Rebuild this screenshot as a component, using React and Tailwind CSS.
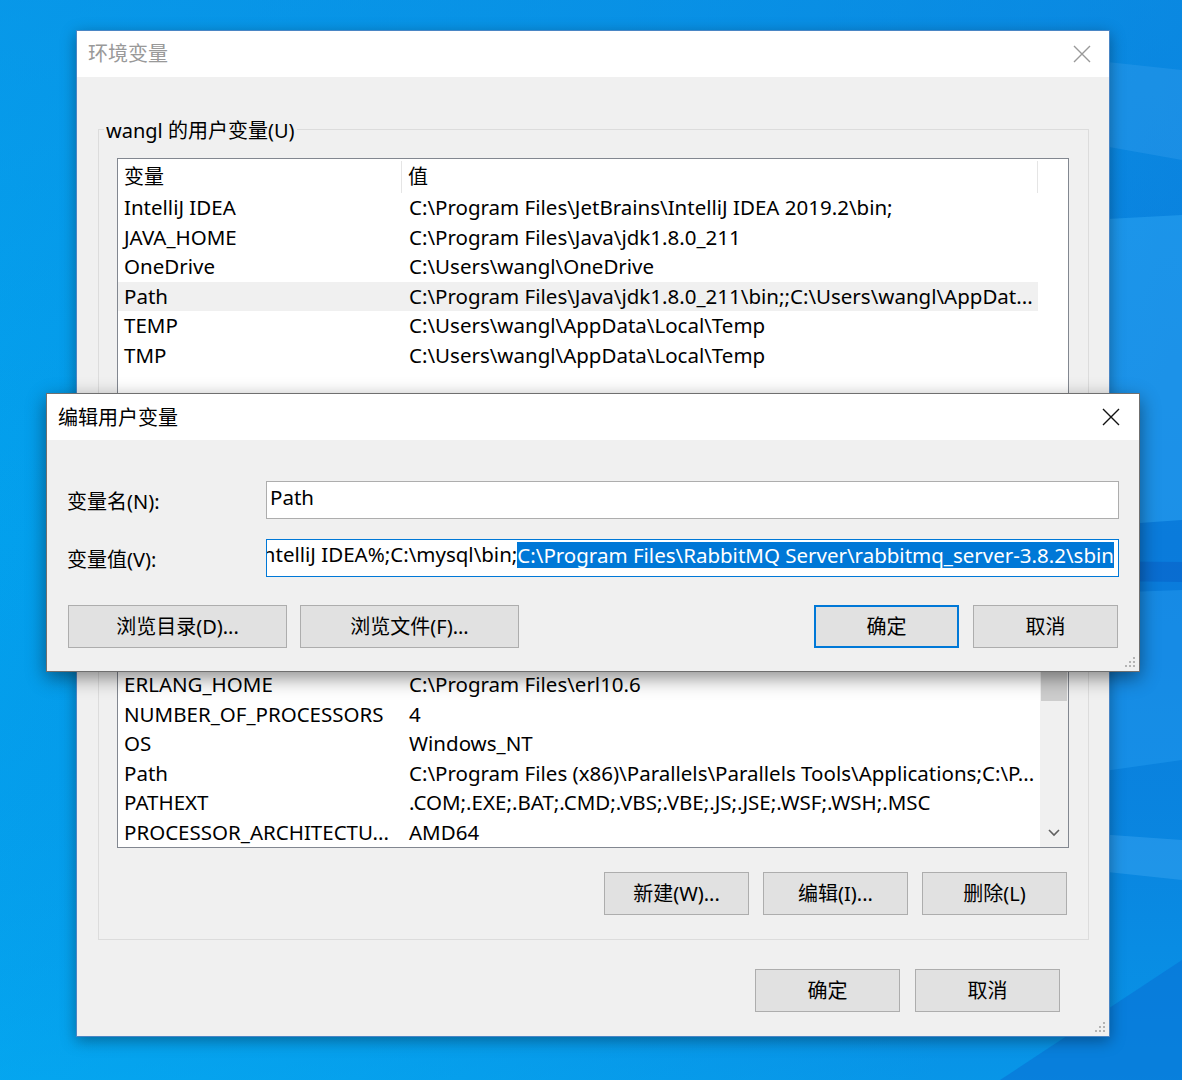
import React from 'react';

const userVars = [
  ['IntelliJ IDEA', 'C:\\Program Files\\JetBrains\\IntelliJ IDEA 2019.2\\bin;'],
  ['JAVA_HOME', 'C:\\Program Files\\Java\\jdk1.8.0_211'],
  ['OneDrive', 'C:\\Users\\wangl\\OneDrive'],
  ['Path', 'C:\\Program Files\\Java\\jdk1.8.0_211\\bin;;C:\\Users\\wangl\\AppDat...'],
  ['TEMP', 'C:\\Users\\wangl\\AppData\\Local\\Temp'],
  ['TMP', 'C:\\Users\\wangl\\AppData\\Local\\Temp'],
];

const sysVars = [
  ['ERLANG_HOME', 'C:\\Program Files\\erl10.6'],
  ['NUMBER_OF_PROCESSORS', '4'],
  ['OS', 'Windows_NT'],
  ['Path', 'C:\\Program Files (x86)\\Parallels\\Parallels Tools\\Applications;C:\\P...'],
  ['PATHEXT', '.COM;.EXE;.BAT;.CMD;.VBS;.VBE;.JS;.JSE;.WSF;.WSH;.MSC'],
  ['PROCESSOR_ARCHITECTU...', 'AMD64'],
];

function CloseX({ color }) {
  return (
    <svg width="18" height="18" viewBox="0 0 18 18">
      <path d="M1 1 L17 17 M17 1 L1 17" stroke={color} strokeWidth="1.4" fill="none" />
    </svg>
  );
}

function Grip() {
  return (
    <svg width="12" height="12" viewBox="0 0 12 12">
      <rect x="9" y="1" width="2" height="2" fill="#b4b4b4" />
      <rect x="5" y="5" width="2" height="2" fill="#b4b4b4" />
      <rect x="9" y="5" width="2" height="2" fill="#b4b4b4" />
      <rect x="1" y="9" width="2" height="2" fill="#b4b4b4" />
      <rect x="5" y="9" width="2" height="2" fill="#b4b4b4" />
      <rect x="9" y="9" width="2" height="2" fill="#b4b4b4" />
    </svg>
  );
}

function Btn({ children, wide, primary }) {
  return (
    <div
      className={
        'h-[43px] flex items-center justify-center bg-[#e1e1e1] text-[20px] text-black ' +
        (wide ? 'w-[219px] ' : 'w-[145px] ') +
        (primary ? 'border-2 border-[#0078d7]' : 'border border-[#adadad]')
      }
    >
      {children}
    </div>
  );
}

function Row({ name, value, selected }) {
  return (
    <div className={'flex h-[29.5px] items-center shrink-0 w-[920px] ' + (selected ? 'bg-[#f0f0f0]' : '')}>
      <div className="w-[284px] shrink-0 pl-[6px] whitespace-nowrap overflow-hidden">{name}</div>
      <div className="pl-[7px] whitespace-nowrap">{value}</div>
    </div>
  );
}

function GroupBox({ label, className, children }) {
  return (
    <div className={'relative border border-[#dcdcdc] ' + className}>
      {label && (
        <span className="absolute left-[5px] -top-[13px] bg-[#f0f0f0] px-[2px] leading-[28px] text-[20px]">
          {label}
        </span>
      )}
      {children}
    </div>
  );
}

function Wallpaper() {
  return (
    <svg className="absolute inset-0" width="1182" height="1080" viewBox="0 0 1182 1080">
      <defs>
        <linearGradient id="bg" x1="0" y1="0" x2="1" y2="0.3">
          <stop offset="0" stopColor="#02a5ef" />
          <stop offset="0.55" stopColor="#0592e6" />
          <stop offset="1" stopColor="#0a7bdb" />
        </linearGradient>
        <linearGradient id="bgv" x1="0" y1="0" x2="0" y2="1">
          <stop offset="0" stopColor="#0b8fe4" stopOpacity="0.6" />
          <stop offset="0.5" stopColor="#0b8fe4" stopOpacity="0" />
          <stop offset="1" stopColor="#06b0f4" stopOpacity="0.5" />
        </linearGradient>
      </defs>
      <rect width="1182" height="1080" fill="url(#bg)" />
      <rect width="1182" height="1080" fill="url(#bgv)" />
      <polygon points="900,40 1182,70 1182,160 900,110" fill="#3aa0ee" opacity="0.35" />
      <polygon points="900,230 1182,215 1182,520 900,540" fill="#2ea6f4" opacity="0.5" />
      <polygon points="900,560 1182,562 1182,582 900,578" fill="#0866cc" opacity="0.7" />
      <polygon points="900,600 1182,590 1182,760 900,800" fill="#27a0f2" opacity="0.4" />
      <polygon points="900,820 1182,840 1182,880 900,850" fill="#4ab0f5" opacity="0.35" />
      <polygon points="1000,1080 1182,960 1182,1080" fill="#0872d6" opacity="0.6" />
    </svg>
  );
}

export default function App() {
  return (
    <div className="relative w-[1182px] h-[1080px] overflow-hidden font-['Noto_Sans','Noto_Sans_CJK_SC',sans-serif] text-black">
      <Wallpaper />

      {/* main window */}
      <div className="absolute left-[76px] top-[30px] w-[1034px] h-[1007px] border border-[#4a86c5] bg-[#f0f0f0] shadow-[0_4px_14px_rgba(0,0,0,0.35)] flex flex-col">
        <div className="h-[46px] shrink-0 bg-white flex items-center justify-between pl-[11px] pr-[18px]">
          <span className="text-[20px] text-[#999999]">环境变量</span>
          <CloseX color="#999999" />
        </div>
        <div className="relative flex-1 pl-[21px] pr-[20px] pt-[52px] flex flex-col">
          <GroupBox label="wangl 的用户变量(U)" className="pt-[28px] pl-[18px] pr-[19px] pb-[23px]">
            <div className="h-[262px] border border-[#828790] bg-white text-[20.5px] overflow-hidden flex flex-col">
              <div className="flex h-[34px] shrink-0 items-center text-[20px] pt-[2px]">
                <div className="w-[284px] pl-[6px] self-stretch flex items-center border-r border-[#e5e5e5]">变量</div>
                <div className="w-[636px] pl-[6px] self-stretch flex items-center border-r border-[#e5e5e5]">值</div>
              </div>
              {userVars.map(([n, v]) => (
                <Row key={n} name={n} value={v} selected={n === 'Path'} />
              ))}
            </div>
            <div className="mt-[23px] flex justify-end gap-[14px] pr-[2px]">
              <Btn>新建(N)...</Btn>
              <Btn>编辑(E)...</Btn>
              <Btn>删除(D)</Btn>
            </div>
          </GroupBox>

          <GroupBox label="系统变量(S)" className="mt-[22px] pt-[28px] pl-[18px] pr-[19px] pb-[24px]">
            <div className="h-[287px] border border-[#828790] bg-white text-[20.5px] overflow-hidden flex">
              <div className="flex-1 flex flex-col justify-end overflow-hidden">
                {sysVars.map(([n, v]) => (
                  <Row key={n + v} name={n} value={v} />
                ))}
              </div>
              <div className="w-[28px] shrink-0 bg-[#f0f0f0] flex flex-col justify-between items-center">
                <div className="w-[26px] h-[139px] bg-[#cdcdcd]" />
                <svg width="12" height="8" viewBox="0 0 12 8" className="mb-[10px]">
                  <path d="M1 1 L6 6 L11 1" stroke="#606060" strokeWidth="1.6" fill="none" />
                </svg>
              </div>
            </div>
            <div className="mt-[24px] flex justify-end gap-[14px] pr-[2px]">
              <Btn>新建(W)...</Btn>
              <Btn>编辑(I)...</Btn>
              <Btn>删除(L)</Btn>
            </div>
          </GroupBox>

          <div className="mt-[29px] flex justify-end gap-[15px] pr-[29px]">
            <Btn>确定</Btn>
            <Btn>取消</Btn>
          </div>
          <div className="absolute right-[3px] bottom-[3px]">
            <Grip />
          </div>
        </div>
      </div>

      {/* edit dialog */}
      <div className="absolute left-[46px] top-[393px] w-[1094px] h-[279px] border border-[#6f6f6f] bg-[#f0f0f0] shadow-[0_6px_18px_rgba(0,0,0,0.45)] flex flex-col">
        <div className="h-[46px] shrink-0 bg-white flex items-center justify-between pl-[11px] pr-[19px]">
          <span className="text-[20px] pt-[1px]">编辑用户变量</span>
          <CloseX color="#111111" />
        </div>
        <div className="relative flex-1 px-[21px] pt-[41px] flex flex-col text-[20px]">
          <div className="flex items-center h-[38px]">
            <div className="w-[199px] shrink-0 pt-[4px] -ml-[1px]">变量名(N):</div>
            <div className="flex-1 h-[38px] border border-[#adadad] bg-white pl-[3px] pt-[1px] leading-[28px] text-[20.5px] mr-[-1px]">Path</div>
          </div>
          <div className="flex items-center h-[38px] mt-[20px]">
            <div className="w-[199px] shrink-0 pt-[4px] -ml-[1px]">变量值(V):</div>
            <div className="flex-1 h-[38px] border border-[#0078d7] bg-white flex justify-end items-center pr-[4px] pb-[7px] overflow-hidden whitespace-nowrap text-[20.5px] mr-[-1px]">
              <span>%IntelliJ IDEA%;C:\mysql\bin;</span>
              <span className="bg-[#0078d7] text-white leading-[26px]">
                C:\Program Files\RabbitMQ Server\rabbitmq_server-3.8.2\sbin
              </span>
            </div>
          </div>
          <div className="mt-[28px] flex items-center">
            <Btn wide>浏览目录(D)...</Btn>
            <div className="ml-[13px]">
              <Btn wide>浏览文件(F)...</Btn>
            </div>
            <div className="ml-auto flex gap-[14px]">
              <Btn primary>确定</Btn>
              <Btn>取消</Btn>
            </div>
          </div>
          <div className="absolute right-[3px] bottom-[3px]">
            <Grip />
          </div>
        </div>
      </div>
    </div>
  );
}
